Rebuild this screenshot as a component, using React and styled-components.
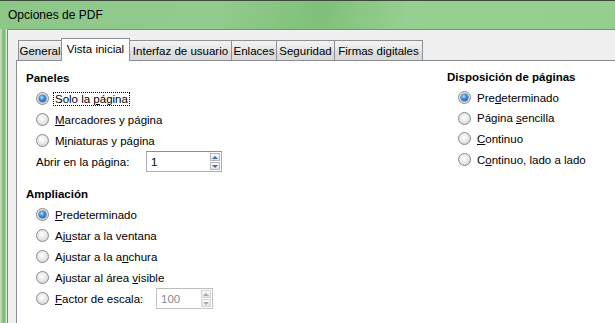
import React from "react";
import styled, { createGlobalStyle, css } from "styled-components";

const Global = createGlobalStyle`
  html, body { margin: 0; padding: 0; background: #f0f0f0; }
  body { font-family: "Liberation Sans", Arial, sans-serif; font-size: 11.5px; color: #000; }
`;

const Window = styled.div`
  width: 615px;
  height: 323px;
  overflow: hidden;
  display: flex;
  flex-direction: column;
  border-top: 1px solid #3c4a3b;
  box-sizing: border-box;
`;

const TitleBar = styled.div`
  height: 28px;
  flex: none;
  display: flex;
  align-items: center;
  padding-left: 8px;
  font-size: 12px;
  background: linear-gradient(100deg, #8cc788 0%, #93cb8e 35%, #80c07b 52%, #97ce91 66%, #96ce90 100%);
`;

const Body = styled.div`
  flex: 1;
  display: flex;
  min-height: 0;
`;

const SideFrame = styled.div`
  width: 7px;
  flex: none;
  background: linear-gradient(90deg, #c9dcc7 0px, #a9d1a4 2px, #76bb70 3px, #7cc076 5px, #d8ecd5 6px);
`;

const Client = styled.div`
  flex: 1;
  background: #f0f0f0;
  border-top: 1px solid #7e8b7d;
  border-left: 1px solid #7e8b7d;
  padding: 8px 0 0 8px;
  display: flex;
  flex-direction: column;
  overflow: hidden;
`;

const TabStrip = styled.div`
  display: flex;
  align-items: flex-end;
  height: 23px;
  margin: 0 0 -1px 2px;
  position: relative;
  z-index: 1;
`;

const Tab = styled.div`
  box-sizing: border-box;
  width: ${(p) => p.w}px;
  height: 20px;
  margin-bottom: 1px;
  border: 1px solid #8d9096;
  border-bottom: none;
  background: linear-gradient(#f3f3f3, #e6e6e6 50%, #dcdcdc 51%, #dadada);
  display: flex;
  align-items: center;
  justify-content: center;
  white-space: nowrap;
  margin-left: -1px;
  &:first-child { margin-left: 0; }
  ${(p) =>
    p.active &&
    css`
      height: 23px;
      margin-bottom: 0;
      background: #fff;
      position: relative;
      z-index: 2;
      padding-bottom: 2px;
    `}
`;

const Page = styled.div`
  flex: 1;
  background: #fff;
  border: 1px solid #898c95;
  margin-right: -20px;
  margin-bottom: -20px;
  padding: 7px 9px;
  display: grid;
  grid-template-columns: 421px 1fr;
  align-content: start;
`;

const Column = styled.div`
  display: flex;
  flex-direction: column;
`;

const Header = styled.div`
  font-weight: bold;
  height: 20px;
  line-height: 20px;
  margin-top: ${(p) => p.top || 0}px;
  margin-bottom: ${(p) => p.bottom || 0}px;
`;

const Row = styled.div`
  height: ${(p) => p.h || 21}px;
  display: flex;
  align-items: center;
  padding-left: ${(p) => p.indent}px;
  white-space: nowrap;
`;

const Radio = styled.span`
  width: 13px;
  height: 13px;
  box-sizing: border-box;
  border-radius: 50%;
  border: 1px solid #8a8a8a;
  background: radial-gradient(circle at 45% 40%, #ffffff 0%, #eaeaea 45%, #c9c9c9 100%);
  margin-right: 6px;
  flex: none;
  position: relative;
  ${(p) =>
    p.checked &&
    css`
      &::after {
        content: "";
        position: absolute;
        left: 2px;
        top: 2px;
        width: 7px;
        height: 7px;
        border-radius: 50%;
        background: radial-gradient(circle at 40% 35%, #bfe4ff 0%, #3d8fe0 40%, #0e4e9e 100%);
        box-shadow: 0 0 0 0.5px #1d4f8a;
      }
    `}
`;

const Label = styled.span`
  display: inline-block;
  ${(p) => p.w && css`width: ${p.w}px;`}
  ${(p) =>
    p.focus &&
    css`
      outline: 1px dotted #000;
      outline-offset: 0px;
      padding: 0 1px;
      margin-left: -1px;
    `}
`;

const Key = styled.u`
  text-decoration: underline;
  text-underline-offset: 1px;
`;

const SpinBox = styled.div`
  width: ${(p) => p.w}px;
  height: 21px;
  box-sizing: border-box;
  border: 1px solid ${(p) => (p.disabled ? "#c4c4c4" : "#abadb3")};
  border-top-color: ${(p) => (p.disabled ? "#bdbdbd" : "#8c8f96")};
  background: #fff;
  display: flex;
  align-items: center;
  padding: 1px 1px 1px 4px;
  color: ${(p) => (p.disabled ? "#8a8a8a" : "#000")};
`;

const SpinValue = styled.span`
  flex: 1;
`;

const SpinButtons = styled.div`
  width: 10px;
  height: 100%;
  display: flex;
  flex-direction: column;
  gap: 1px;
`;

const SpinHalf = styled.div`
  flex: 1;
  box-sizing: border-box;
  border: 1px solid ${(p) => (p.disabled ? "#d3d3d3" : "#b4b7bd")};
  background: linear-gradient(#fafafa, #e4e4e4);
  display: flex;
  align-items: center;
  justify-content: center;
  &::after {
    content: "";
    width: 0;
    height: 0;
    border-left: 3px solid transparent;
    border-right: 3px solid transparent;
    ${(p) =>
      p.up
        ? css`border-bottom: 3px solid ${p.disabled ? "#a8a8a8" : "#3e6a9e"};`
        : css`border-top: 3px solid ${p.disabled ? "#a8a8a8" : "#3e6a9e"};`}
  }
`;

const Spin = ({ value, w, disabled }) => (
  <SpinBox w={w} disabled={disabled}>
    <SpinValue>{value}</SpinValue>
    <SpinButtons>
      <SpinHalf up disabled={disabled} />
      <SpinHalf disabled={disabled} />
    </SpinButtons>
  </SpinBox>
);

const Option = ({ checked, children, indent = 10, focus, h }) => (
  <Row indent={indent} h={h}>
    <Radio checked={checked} />
    <Label focus={focus}>{children}</Label>
  </Row>
);

const tabs = [
  ["General", 44],
  ["Vista inicial", 69],
  ["Interfaz de usuario", 103],
  ["Enlaces", 46],
  ["Seguridad", 59],
  ["Firmas digitales", 89],
];

export default function App() {
  return (
    <>
      <Global />
      <Window>
        <TitleBar>Opciones de PDF</TitleBar>
        <Body>
          <SideFrame />
          <Client>
            <TabStrip>
              {tabs.map(([t, w], i) => (
                <Tab key={t} w={w} active={i === 1}>
                  {t}
                </Tab>
              ))}
            </TabStrip>
            <Page>
              <Column>
                <Header>Paneles</Header>
                <Option checked focus>
                  Solo la <Key>p</Key>ágina
                </Option>
                <Option>
                  <Key>M</Key>arcadores y página
                </Option>
                <Option>
                  M<Key>i</Key>niaturas y página
                </Option>
                <Row indent={10}>
                  <Label w={110}>
                    Abrir en la pá<Key>g</Key>ina:
                  </Label>
                  <Spin value="1" w={76} />
                </Row>
                <Header top={12}>Ampliación</Header>
                <Option checked>
                  <Key>P</Key>redeterminado
                </Option>
                <Option>
                  Aj<Key>u</Key>star a la ventana
                </Option>
                <Option>
                  Ajustar a la a<Key>n</Key>chura
                </Option>
                <Option>
                  Ajustar al área <Key>v</Key>isible
                </Option>
                <Row indent={10}>
                  <Radio />
                  <Label w={101}>
                    <Key>F</Key>actor de escala:
                  </Label>
                  <Spin value="100" w={57} disabled />
                </Row>
              </Column>
              <Column>
                <Header top={-1} bottom={0}>
                  Disposición de páginas
                </Header>
                <Option checked indent={11} h={21}>
                  Pre<Key>d</Key>eterminado
                </Option>
                <Option indent={11} h={20}>
                  Página <Key>s</Key>encilla
                </Option>
                <Option indent={11} h={21}>
                  <Key>C</Key>ontinuo
                </Option>
                <Option indent={11} h={21}>
                  C<Key>o</Key>ntinuo, lado a lado
                </Option>
              </Column>
            </Page>
          </Client>
        </Body>
      </Window>
    </>
  );
}
